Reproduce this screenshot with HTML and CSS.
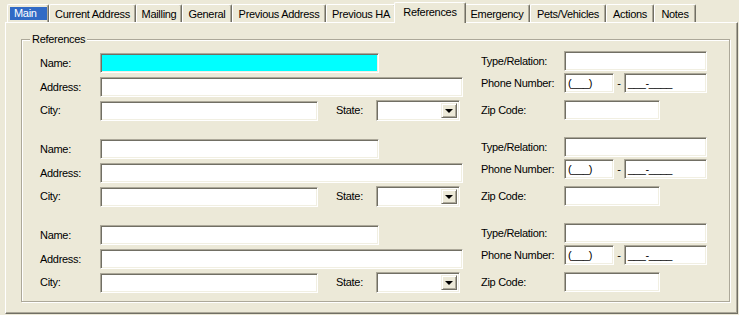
FILE: index.html
```html
<!DOCTYPE html>
<html lang="en">
<head>
    <meta charset="UTF-8">
    <title>References</title>
    <link rel="stylesheet" href="styles.css">
</head>
<body>
    <div class="tabs">
        <div class="tab tab-main"><span class="focus">Main</span></div>
        <div class="tab t-cur">Current Address</div>
        <div class="tab t-mail">Mailling</div>
        <div class="tab t-gen">General</div>
        <div class="tab t-prev">Previous Address</div>
        <div class="tab t-ha">Previous HA</div>
        <div class="tab active">References</div>
        <div class="tab t-emer">Emergency</div>
        <div class="tab t-pets">Pets/Vehicles</div>
        <div class="tab t-act">Actions</div>
        <div class="tab t-notes">Notes</div>
    </div>

    <div class="panel">
        <div class="group">
            <div class="legend">References</div>

            <div class="ref">
                <div class="col-left">
                    <div class="row"><span class="lbl">Name:</span><div class="box w-name hl"></div></div>
                    <div class="row"><span class="lbl">Address:</span><div class="box w-addr"></div></div>
                    <div class="row"><span class="lbl">City:</span><div class="box w-city"></div><span class="state-lbl">State:</span><div class="select"><span class="drop"></span></div></div>
                </div>
                <div class="col-right">
                    <div class="row"><span class="rlbl">Type/Relation:</span><div class="box w-type"></div></div>
                    <div class="row row-phone"><span class="rlbl">Phone Number:</span><div class="box w-ph1">(___)</div><span class="dash">-</span><div class="box w-ph2">___-____</div></div>
                    <div class="row row-zip"><span class="rlbl">Zip Code:</span><div class="box w-zip"></div></div>
                </div>
            </div>

            <div class="ref">
                <div class="col-left">
                    <div class="row"><span class="lbl">Name:</span><div class="box w-name"></div></div>
                    <div class="row"><span class="lbl">Address:</span><div class="box w-addr"></div></div>
                    <div class="row"><span class="lbl">City:</span><div class="box w-city"></div><span class="state-lbl">State:</span><div class="select"><span class="drop"></span></div></div>
                </div>
                <div class="col-right">
                    <div class="row"><span class="rlbl">Type/Relation:</span><div class="box w-type"></div></div>
                    <div class="row row-phone"><span class="rlbl">Phone Number:</span><div class="box w-ph1">(___)</div><span class="dash">-</span><div class="box w-ph2">___-____</div></div>
                    <div class="row row-zip"><span class="rlbl">Zip Code:</span><div class="box w-zip"></div></div>
                </div>
            </div>

            <div class="ref">
                <div class="col-left">
                    <div class="row"><span class="lbl">Name:</span><div class="box w-name"></div></div>
                    <div class="row"><span class="lbl">Address:</span><div class="box w-addr"></div></div>
                    <div class="row"><span class="lbl">City:</span><div class="box w-city"></div><span class="state-lbl">State:</span><div class="select"><span class="drop"></span></div></div>
                </div>
                <div class="col-right">
                    <div class="row"><span class="rlbl">Type/Relation:</span><div class="box w-type"></div></div>
                    <div class="row row-phone"><span class="rlbl">Phone Number:</span><div class="box w-ph1">(___)</div><span class="dash">-</span><div class="box w-ph2">___-____</div></div>
                    <div class="row row-zip"><span class="rlbl">Zip Code:</span><div class="box w-zip"></div></div>
                </div>
            </div>
        </div>
    </div>
</body>
</html>
```

FILE: styles.css
```css
body {
    margin: 0;
    background-color: #ece9d8;
    font-family: "Liberation Sans", Arial, sans-serif;
    font-size: 11px;
    letter-spacing: -0.3px;
    line-height: 13px;
    color: #000;
}

/* tab strip */
.tabs {
    display: flex;
    align-items: flex-end;
    height: 22px;
    padding-left: 7px;
    position: relative;
    z-index: 1;
}

.tab {
    flex: none;
    box-sizing: border-box;
    height: 18px;
    padding-top: 3px;
    border-top: 1px solid #fff;
    border-left: 1px solid #fff;
    border-right: 1px solid #716f64;
    border-top-left-radius: 2px;
    border-top-right-radius: 2px;
    box-shadow: inset -1px 0 0 #aca899;
    text-align: center;
    white-space: nowrap;
    background-color: #ece9d8;
}

.tab.active {
    width: 72px;
    height: 21px;
    margin: 0 -2px -1px -2px;
    position: relative;
}

.tab-main {
    width: 42px;
    padding: 2px 0 0 2px;
    text-align: left;
}

.t-cur { width: 87px; }
.t-mail { width: 46px; }
.t-gen { width: 50px; }
.t-prev { width: 94px; }
.t-ha { width: 70px; }
.t-emer { width: 66px; }
.t-pets { width: 76px; }
.t-act { width: 48px; }
.t-notes { width: 42px; }

.focus {
    display: inline-block;
    height: 13px;
    padding: 0 10px 0 4px;
    background-color: #316ac5;
    color: #fff;
}

/* page body */
.panel {
    box-sizing: border-box;
    width: 733px;
    height: 292px;
    margin-left: 5px;
    padding-top: 16px;
    border-top: 1px solid #fff;
    border-left: 1px solid #fff;
    border-right: 1px solid #716f64;
    border-bottom: 1px solid #716f64;
    box-shadow: inset -1px -1px 0 #aca899;
}

.group {
    box-sizing: border-box;
    width: 709px;
    height: 263px;
    margin-left: 15px;
    padding-left: 18px;
    border: 1px solid #aca899;
    box-shadow: inset 1px 1px 0 #fff, 1px 1px 0 #fff;
}

.legend {
    width: fit-content;
    margin: -7px 0 5px -10px;
    padding: 0 2px;
    background-color: #ece9d8;
}

.ref {
    display: flex;
    gap: 18px;
    height: 69px;
    margin-bottom: 17px;
}

.col-left {
    width: 423px;
    padding-top: 2px;
    display: flex;
    flex-direction: column;
    gap: 4px;
}

.col-left .row:last-child {
    margin-top: -1px;
}

.col-right {
    display: flex;
    flex-direction: column;
    gap: 2px;
}

.row {
    display: flex;
    align-items: center;
}

.row-zip {
    margin-top: 5px;
}

.lbl {
    width: 60px;
}

.rlbl {
    width: 83px;
}

.state-lbl {
    width: 40px;
    margin-left: 18px;
}

.dash {
    width: 10px;
    text-align: center;
}

/* sunken edit boxes */
.box {
    box-sizing: border-box;
    height: 20px;
    padding: 3px 0 0 3px;
    background-color: #fff;
    border-top: 1px solid #aca899;
    border-left: 1px solid #aca899;
    border-right: 1px solid #fff;
    border-bottom: 1px solid #fff;
    box-shadow: inset 1px 1px 0 #716f64, inset -1px -1px 0 #f1efe2;
    white-space: nowrap;
}

.box.hl {
    background-color: #00ffff;
}

.w-name { width: 279px; }
.w-addr { width: 363px; }
.w-city { width: 218px; }
.w-type { width: 143px; }
.w-ph1 { width: 50px; }
.w-ph2 { width: 83px; }
.w-zip { width: 96px; }

.select {
    box-sizing: border-box;
    width: 84px;
    height: 21px;
    display: flex;
    justify-content: flex-end;
    padding: 2px;
    background-color: #fff;
    border-top: 1px solid #aca899;
    border-left: 1px solid #aca899;
    border-right: 1px solid #fff;
    border-bottom: 1px solid #fff;
    box-shadow: inset 1px 1px 0 #716f64, inset -1px -1px 0 #f1efe2;
}

.drop {
    box-sizing: border-box;
    width: 16px;
    height: 100%;
    display: flex;
    align-items: center;
    justify-content: center;
    background-color: #ece9d8;
    border-top: 1px solid #f1efe2;
    border-left: 1px solid #f1efe2;
    border-right: 1px solid #716f64;
    border-bottom: 1px solid #716f64;
    box-shadow: inset 1px 1px 0 #fff, inset -1px -1px 0 #aca899;
}

.drop::after {
    content: "";
    border-left: 4px solid transparent;
    border-right: 4px solid transparent;
    border-top: 4px solid #000;
    margin-top: 1px;
}
```
